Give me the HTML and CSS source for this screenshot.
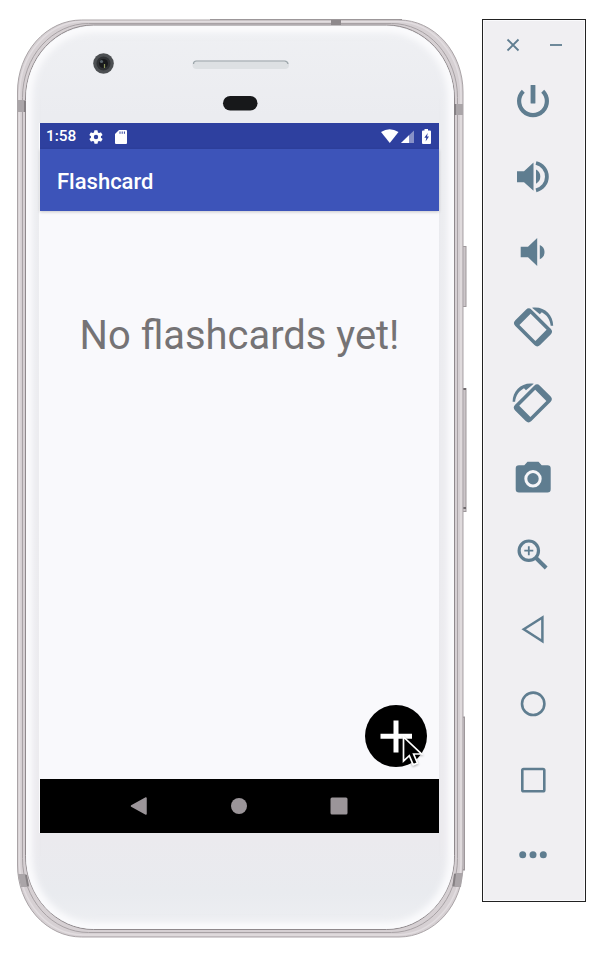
FILE: index.html
```html
<!DOCTYPE html>
<html lang="en">
<head>
<meta charset="utf-8">
<title>Flashcard</title>
<link rel="stylesheet" href="styles.css">
</head>
<body>
<main class="desk">
  <section class="phone">
    <svg class="shell" viewBox="0 0 470 953" aria-hidden="true">
      <defs>
        <linearGradient id="glass" x1="0" y1="0" x2="0" y2="1">
          <stop offset="0" stop-color="#eff0f3"/>
          <stop offset=".1" stop-color="#ebecf0"/>
          <stop offset=".9" stop-color="#ebeaee"/>
          <stop offset=".96" stop-color="#e9ebef"/>
          <stop offset="1" stop-color="#eeeff2"/>
        </linearGradient>
        <filter id="soft" x="-5%" y="-5%" width="110%" height="110%"><feGaussianBlur stdDeviation="3"/></filter>
        <clipPath id="face"><rect x="26" y="26" width="428" height="903" rx="68" ry="72"/></clipPath>
      </defs>
      <path d="M210 19.5H402" stroke="#8e898c"/>
      <g fill="#cbc5c8" stroke="#9e989b">
        <rect x="462.5" y="246.500" width="3.500" height="60"/>
        <rect x="462.5" y="388.500" width="3.500" height="123"/>
        <rect x="462.500" y="717" width="2" height="153"/>
      </g>
      <path d="M463 389h3M463 508h3" stroke="#6f6a6d" stroke-width="2"/>
      <rect x="17.500" y="20" width="445.500" height="917" rx="64" ry="72" fill="#d6d0d3" stroke="#aaa4a7"/>
      <rect x="19.500" y="21.500" width="441.500" height="913.500" rx="64" ry="73" fill="none" stroke="#e2dde0" stroke-width="1.500"/>
      <rect x="22.500" y="23.500" width="435" height="909" rx="66" ry="74" fill="none" stroke="#a8a2a5"/>
      <rect x="25.500" y="25" width="429" height="904.500" rx="68" ry="74" fill="url(#glass)" stroke="#8f898c"/>
      <rect x="27" y="27" width="426" height="901" rx="67" ry="72" fill="none" stroke="#fbfbfd" stroke-width="11" filter="url(#soft)" clip-path="url(#face)"/>
      <path d="M331 22.500h10" stroke="#8e898c" stroke-width="5"/>
      <g fill="#aaa5a8">
        <path d="M17 100H26V112H17zM454 104H463V115H454z"/>
        <path d="M18 874H26L29 887H21zM454.500 873H462.500L461 887H452z"/>
      </g>
      <path d="M25 101v11M455 104v11M26 875l2 11M455 874l-1.500 12" stroke="#858083" stroke-width="2"/>
      <circle cx="103.500" cy="63.500" r="10.300" fill="#4c4f52"/>
      <circle cx="103.500" cy="63.500" r="7" fill="#303235"/>
      <circle cx="103.500" cy="63.500" r="4.500" fill="#18191c"/>
      <circle cx="101.500" cy="61.500" r="1.600" fill="#59646b"/>
      <path d="M104.500 64v4" stroke="#8c9659" stroke-width="1.200"/>
      <rect x="192.500" y="60.500" width="96.500" height="8.500" rx="4" fill="#dde0e3"/>
      <path d="M193.500 64q0-3 3-3h88q3 0 3.500 3" fill="none" stroke="#9ba4a9" stroke-width="1.200"/>
      <rect x="223" y="96" width="34.500" height="14.500" rx="7.200" fill="#17181a"/>
    </svg>

    <div class="screen">
      <header class="status">
        <span class="clock">1:58</span>
        <svg class="gear" viewBox="0 0 24 24"><path fill="#fff" fill-rule="evenodd" d="M19.400 13a7.500 7.500 0 0 0 0-2l2.100-1.600a.5.500 0 0 0 .1-.7l-2-3.400a.5.500 0 0 0-.6-.2l-2.500 1a7.300 7.300 0 0 0-1.700-1l-.4-2.600a.5.500 0 0 0-.5-.5h-4a.5.500 0 0 0-.5.500L9 5.100a7.300 7.300 0 0 0-1.700 1l-2.500-1a.5.500 0 0 0-.6.200l-2 3.400a.5.500 0 0 0 .1.700L4.500 11a7.500 7.500 0 0 0 0 2l-2.100 1.600a.5.500 0 0 0-.1.700l2 3.400c.1.200.4.300.6.200l2.500-1a7.300 7.300 0 0 0 1.700 1l.4 2.600c0 .3.200.5.500.5h4c.3 0 .5-.2.500-.5l.4-2.600a7.300 7.300 0 0 0 1.700-1l2.500 1c.2.100.5 0 .6-.2l2-3.400a.5.500 0 0 0-.1-.7zM12 15.300a3.300 3.300 0 1 1 0-6.600 3.300 3.300 0 0 1 0 6.600z"/></svg>
        <svg class="card" viewBox="0 0 12 14"><path fill="#fff" d="M4 0h7q1 0 1 1v12q0 1-1 1H1q-1 0-1-1V4z"/><path stroke="#2e409f" stroke-width="1" d="M5 1.500v2.300M7.200 1.500v2.300M9.400 1.500v2.300"/></svg>
        <svg class="signals" viewBox="0 0 52 15">
          <path fill="#fff" d="M0 3Q8.500-2.500 17.500 3L8.800 14z"/>
          <path fill="#8791c7" d="M20 14L33 1.500V14z"/><path fill="#fff" d="M20 14L28 6.300V14z"/>
          <path fill="#fff" d="M43.500 1.500V0h3.500v1.500H49q1 0 1 1V14q0 1-1 1h-7q-1 0-1-1V2.500q0-1 1-1z"/>
          <path fill="#2e409f" d="M46.800 4L43.300 8.800H45.300L44.600 12.400L48 7.500H46z"/>
        </svg>
      </header>
      <div class="appbar">Flashcard</div>
      <div class="content">
        <p class="empty">No flashcards yet!</p>
        <div class="fab">
          <svg viewBox="0 0 62 62"><path d="M31 15.500V47.500M15.500 31.200H47" stroke="#fff" stroke-width="5"/></svg>
          <svg class="cursor" viewBox="0 0 22 32"><path d="M1.500 2V26L7.300 20.600L11.200 29.800L15.400 28L11.600 19H19.500z" fill="#000" stroke="#fff" stroke-width="1.700"/></svg>
        </div>
      </div>
      <nav class="navbar">
        <svg viewBox="0 0 20 20"><path d="M2.500 10L17 2V18z" fill="#9b9599" stroke="#9b9599" stroke-width="1.500" stroke-linejoin="round"/></svg>
        <svg viewBox="0 0 20 20"><circle cx="10" cy="10" r="8" fill="#9b9599"/></svg>
        <svg viewBox="0 0 20 20"><rect x="1.500" y="1.500" width="17" height="17" rx="1.500" fill="#9b9599"/></svg>
      </nav>
    </div>
  </section>

  <aside class="tools">
    <div class="window">
      <svg viewBox="0 0 12 12"><path d="M.5.500L11.500 11.500M11.500.500L.5 11.500"/></svg>
      <svg viewBox="0 0 12 12"><path d="M0 6H12"/></svg>
    </div>
    <div class="buttons">
      <svg viewBox="0 0 40 40"><path class="line" stroke-width="4.200" d="M10.300 10.200A13.900 13.900 0 1 0 29.700 10.200"/><rect x="17.600" y="4" width="4.800" height="18.500" rx=".6"/></svg>
      <svg viewBox="0 0 40 40"><path d="M4 14.300H11L20.500 5.500V33.800L11 25.200H4zM23 12.500A8 8 0 0 1 23 26.700z"/><path class="line" stroke-width="3.800" d="M23 6A14 14 0 0 1 23 33.300"/></svg>
      <svg viewBox="0 0 40 40"><path d="M7.700 14.700H15L24.200 6V34L15 25.300H7.700zM26.800 13A7.700 7.700 0 0 1 26.800 27.200z"/></svg>
      <svg viewBox="0 0 40 40"><g id="turn"><path fill-rule="evenodd" transform="translate(20 20.400) rotate(45)" d="M-13.500-11.500H13.500Q17.500-11.500 17.500-7.500V7.500Q17.500 11.500 13.500 11.500H-13.500Q-17.500 11.500-17.500 7.500V-7.500Q-17.500-11.500-13.500-11.500zM-11.300-7.900V7.900H11.300V-7.900z"/><path d="M19 .8C31-1 40 7.500 40.200 18.700H37.700C37 12.500 34 8 28.800 5.200L26.800 7.200z"/></g></svg>
      <svg viewBox="0 0 40 40"><use href="#turn" transform="matrix(-1 0 0 1 39.800 0)"/></svg>
      <svg viewBox="0 0 40 40"><path d="M6 7.300H11.300L14.500 3.700H25.500L28.700 7.300H34.500Q37.700 7.300 37.700 10.500V31.300Q37.700 34.500 34.500 34.500H6Q2.700 34.500 2.700 31.300V10.500Q2.700 7.300 6 7.300z"/><circle cx="20" cy="20.800" r="7.200" fill="none" stroke="#f5f5f8" stroke-width="3"/></svg>
      <svg viewBox="0 0 40 40"><circle class="line" cx="15.800" cy="16.700" r="9.700" stroke-width="3.200"/><path class="line" stroke-width="1.800" d="M15.800 12.200V21.200M11.300 16.700H20.300"/><path class="line" stroke-width="4" d="M22.800 23.800L33.200 34"/></svg>
      <svg viewBox="0 0 40 40"><path class="line" stroke-width="2.500" d="M10.800 20.300L29.400 8.500V32.200z"/></svg>
      <svg viewBox="0 0 40 40"><circle class="line" cx="20.200" cy="19.800" r="11.200" stroke-width="2.600"/></svg>
      <svg viewBox="0 0 40 40"><rect class="line" x="9.300" y="9" width="22" height="22.200" rx="1.300" stroke-width="2.600"/></svg>
      <svg viewBox="0 0 40 40"><circle cx="9.700" cy="19.800" r="3.500"/><circle cx="20" cy="19.800" r="3.500"/><circle cx="30.300" cy="19.800" r="3.500"/></svg>
    </div>
  </aside>
</main>
</body>
</html>
```
FILE: styles.css
```css
* { box-sizing: border-box; }
body { margin: 0; background: #fff; font-family: Roboto, sans-serif; }
svg { display: block; flex: none; overflow: visible; }
.desk { display: flex; width: 600px; height: 953px; overflow: hidden; }

.phone { position: relative; flex: none; width: 482px; padding: 123px 0 0 39px; }
.shell { position: absolute; left: 0; top: 0; width: 470px; height: 953px; }
.screen { position: relative; display: flex; flex-direction: column; width: 400px; height: 710px; border-left: 1px solid #fafafc; background: #f9f9fc; }

.status { display: flex; align-items: center; height: 26px; padding: 1px 6px 0; background: #2e409f; }
.clock { width: 42px; color: #fff; font-size: 15.400px; font-weight: 500; line-height: 25px; }
.gear { width: 16px; height: 16px; }
.card { width: 12px; height: 14px; margin-left: 11px; }
.signals { width: 52px; height: 15px; margin-left: auto; }

.appbar { height: 62px; padding-left: 17px; background: #3d54b9; color: #fff; font-size: 22px; font-weight: 500; line-height: 65px; box-shadow: 0 1px 3px #0003; }
.content { display: flex; flex: 1; flex-direction: column; align-items: center; justify-content: space-between; padding: 101px 0 12px; }
.empty { margin: 0; color: #757375; font-size: 39.900px; line-height: 48px; white-space: nowrap; }
.fab { position: relative; align-self: flex-end; width: 62px; height: 62px; margin-right: 12px; border-radius: 50%; background: #000; }
.cursor { position: absolute; left: 37px; top: 30px; width: 22px; height: 32px; filter: drop-shadow(0 1px 1px #0005); }
.navbar { display: flex; align-items: center; justify-content: center; gap: 80px; height: 54px; padding-right: 2px; background: #000; }
.navbar svg { width: 20px; height: 20px; }

.tools { flex: none; width: 104px; height: 883px; margin-top: 19px; border: 1px solid #222; background: #f0eff2; box-shadow: inset 0 0 0 1px #fafafc; }
.window { display: flex; gap: 31px; height: 43px; padding: 18.500px 0 0 23.500px; }
.window svg { width: 12px; height: 12px; fill: none; stroke: #5f7d90; stroke-width: 1.800; }
.buttons { display: grid; grid-template-rows: repeat(11, 75.400px); place-items: center; margin-top: .5px; padding-right: 2px; }
.buttons svg { width: 40px; height: 40px; fill: #5f7d90; }
.buttons .line { fill: none; stroke: #5f7d90; }
```
